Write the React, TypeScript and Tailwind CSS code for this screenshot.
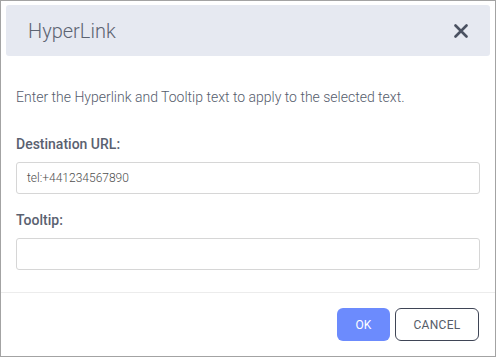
import React from 'react';

const CloseIcon: React.FC = () => (
    <svg width="14" height="14" viewBox="0 0 14 14" fill="none">
        <path d="M1.5 1.5 L12.5 12.5 M12.5 1.5 L1.5 12.5" stroke="#4a5161" strokeWidth="2.6" strokeLinecap="round" />
    </svg>
);

const Field: React.FC<{ label: string; value?: string }> = ({ label, value }) => (
    <div>
        <label className="block text-[14px] font-medium text-[#5a6170] leading-5">{label}</label>
        <div className="mt-[8px] h-[32px] rounded-[3px] border border-[#d6d6d6] flex items-center px-[10px] text-[12px] font-light text-[#4f4f4f]">
            {value}
        </div>
    </div>
);

const App: React.FC = () => {
    return (
        <div className="w-[496px] h-[357px] bg-white border border-[#a3a3a3] flex flex-col font-['Roboto',sans-serif]">
            {/* header */}
            <div className="mx-[5px] mt-[4px] h-[51px] rounded-[3px] bg-[#e6e9f1] flex items-center justify-between pl-[22px] pr-[22px]">
                <h1 className="text-[20px] font-light text-[#5d6472] leading-none">HyperLink</h1>
                <CloseIcon />
            </div>

            {/* body */}
            <div className="px-[15px] pt-[31px] pb-[22px] border-b border-[#ececec]">
                <p className="text-[14px] font-light text-[#555c6c] leading-5">
                    Enter the Hyperlink and Tooltip text to apply to the selected text.
                </p>
                <div className="mt-[27px] flex flex-col gap-[16px]">
                    <Field label="Destination URL:" value="tel:+441234567890" />
                    <Field label="Tooltip:" />
                </div>
            </div>

            {/* footer */}
            <div className="flex justify-end gap-[5px] px-[16px] pt-[15px]">
                <button className="h-[33px] w-[53px] rounded-[6px] bg-[#6c8bfd] text-white text-[12px]">
                    OK
                </button>
                <button className="h-[33px] w-[84px] rounded-[6px] border border-[#3f4556] text-[#565c68] text-[12px] tracking-[0.3px]">
                    CANCEL
                </button>
            </div>
        </div>
    );
};

export default App;
